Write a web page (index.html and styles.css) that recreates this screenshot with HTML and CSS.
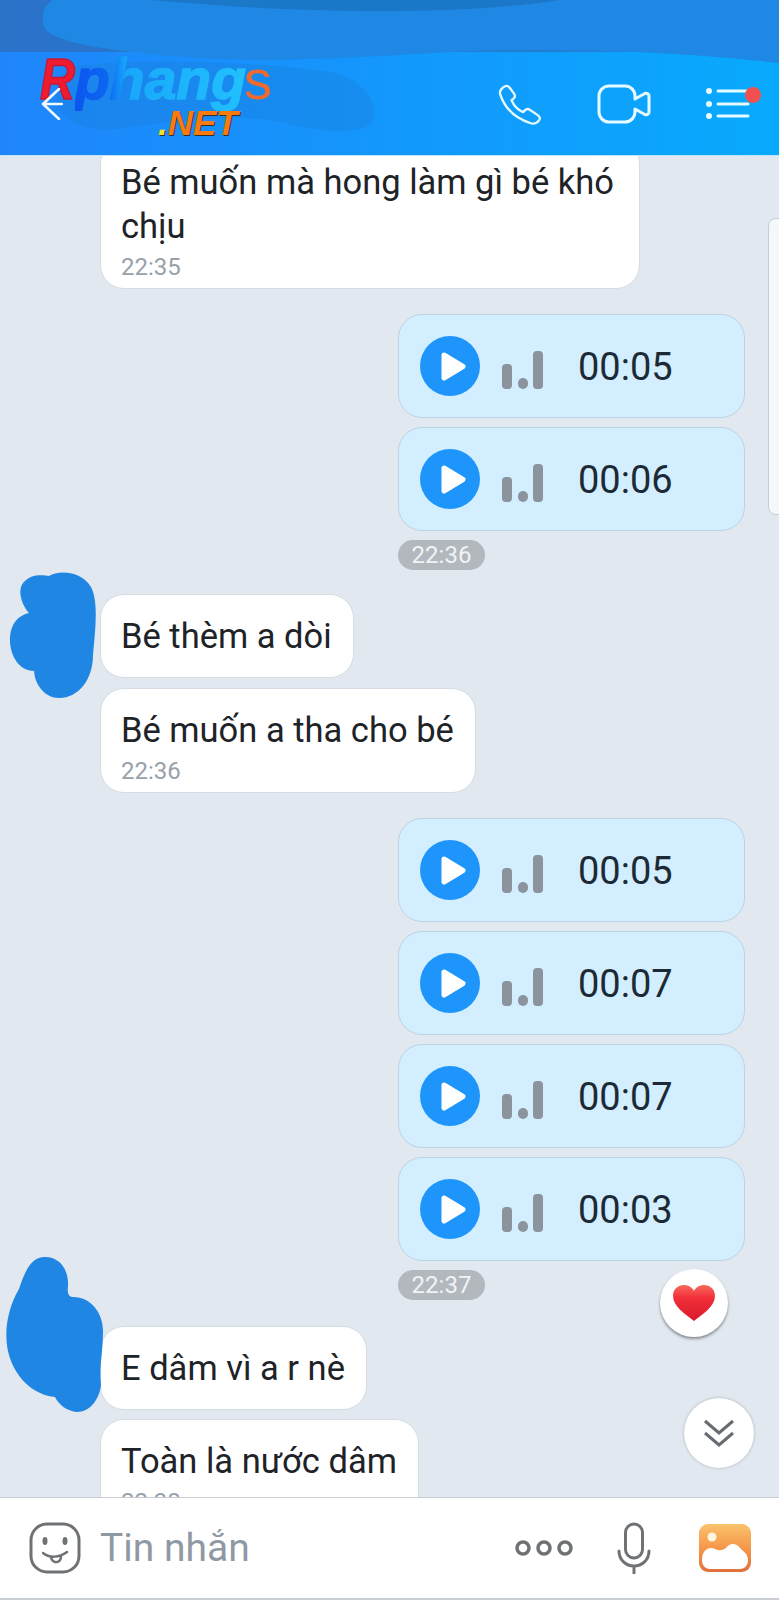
FILE: index.html
```html
<!DOCTYPE html>
<html lang="vi">
<head>
    <meta charset="UTF-8">
    <title>Tin nhắn</title>
    <link rel="stylesheet" href="styles.css">
</head>
<body>
    <div class="screen">
        <header class="header">
            <svg class="scribble" viewBox="0 0 779 156" width="779" height="156">
                <path fill="#1b78c9" d="M150 0H560C470 14 330 16 150 0Z"/>
                <path fill="#1f88e4" d="M52 0H150C330 16 470 14 560 0H779V63C700 54 620 50 520 50C420 50 300 68 160 55C110 50 60 44 46 30C40 20 42 8 52 0Z"/>
                <path fill="#1a7fdc" opacity="0.4" d="M75 66C150 58 260 62 330 72C368 80 380 108 372 122C360 136 320 132 280 122C230 112 170 122 110 130C80 130 60 118 56 100C54 84 60 70 75 66Z"/>
            </svg>
            <div class="status"></div>
            <nav class="nav">
                <svg class="back" viewBox="0 0 22 32" width="22" height="32">
                    <path d="M18 1L2 16L18 31M2 16H21" fill="none" stroke="#f4f9ff" stroke-width="2.500" stroke-linecap="round" stroke-linejoin="round"/>
                </svg>
                <svg class="nav-icon phone" viewBox="50 65 140 130" width="47" height="43">
                    <path d="M62 100C58 88 68 78 78 74C84 72 88 76 91 80L104 98C108 104 105 110 101 113L96 117C102 131 116 147 131 153L137 147C141 143 147 143 151 146L176 163C182 167 183 173 179 178C173 186 163 190 152 186C105 170 75 140 62 100Z" fill="none" stroke="#e6fbff" stroke-width="7" stroke-linejoin="round"/>
                </svg>
                <svg class="nav-icon" viewBox="0 0 56 42" width="56" height="42">
                    <path d="M12 3H28A10 10 0 0 1 38 13V16L47 11A3 3 0 0 1 52 13.500V28.500A3 3 0 0 1 47 31L38 26V29A10 10 0 0 1 28 39H12A10 10 0 0 1 2 29V13A10 10 0 0 1 12 3Z" fill="none" stroke="#e6fbff" stroke-width="3" stroke-linejoin="round"/>
                </svg>
                <svg class="nav-icon" viewBox="0 0 56 42" width="56" height="42">
                    <g fill="#e6fbff">
                        <circle cx="4" cy="8" r="3"/>
                        <circle cx="4" cy="21" r="3"/>
                        <circle cx="4" cy="33" r="3"/>
                    </g>
                    <path d="M13 8H43M13 21H43M13 33H43" stroke="#e6fbff" stroke-width="3" stroke-linecap="round"/>
                    <circle cx="48" cy="12" r="8" fill="#f2504f"/>
                </svg>
            </nav>
            <div class="logo">
                <span class="logo-r">R</span><span class="logo-phang">phang</span><span class="logo-s">s</span>
                <div class="logo-net"><span class="logo-dot">.</span>NET</div>
            </div>
        </header>

        <main class="chat">
            <div class="group left first">
                <div class="bubble wide">
                    Bé muốn mà hong làm gì bé khó chịu
                    <div class="time">22:35</div>
                </div>
            </div>

            <div class="group right">
                <div class="voice">
                    <svg class="play" viewBox="0 0 60 60" width="60" height="60"><circle cx="30" cy="30" r="30" fill="#1e95fa"/><path d="M24 19L43 30.500L24 42Z" fill="#fff" stroke="#fff" stroke-width="5" stroke-linejoin="round"/></svg>
                    <svg class="bars" viewBox="0 0 41 38" width="41" height="38"><rect x="0" y="13" width="10" height="25" rx="4"/><rect x="16" y="27" width="10" height="11" rx="5"/><rect x="31" y="0" width="10" height="38" rx="4"/></svg>
                    <span class="length">00:05</span>
                </div>
                <div class="voice">
                    <svg class="play" viewBox="0 0 60 60" width="60" height="60"><circle cx="30" cy="30" r="30" fill="#1e95fa"/><path d="M24 19L43 30.500L24 42Z" fill="#fff" stroke="#fff" stroke-width="5" stroke-linejoin="round"/></svg>
                    <svg class="bars" viewBox="0 0 41 38" width="41" height="38"><rect x="0" y="13" width="10" height="25" rx="4"/><rect x="16" y="27" width="10" height="11" rx="5"/><rect x="31" y="0" width="10" height="38" rx="4"/></svg>
                    <span class="length">00:06</span>
                </div>
                <div class="pill">22:36</div>
            </div>

            <div class="group left">
                <div class="bubble">Bé thèm a dòi</div>
                <div class="bubble">
                    Bé muốn a tha cho bé
                    <div class="time">22:36</div>
                </div>
            </div>

            <div class="group right">
                <div class="voice">
                    <svg class="play" viewBox="0 0 60 60" width="60" height="60"><circle cx="30" cy="30" r="30" fill="#1e95fa"/><path d="M24 19L43 30.500L24 42Z" fill="#fff" stroke="#fff" stroke-width="5" stroke-linejoin="round"/></svg>
                    <svg class="bars" viewBox="0 0 41 38" width="41" height="38"><rect x="0" y="13" width="10" height="25" rx="4"/><rect x="16" y="27" width="10" height="11" rx="5"/><rect x="31" y="0" width="10" height="38" rx="4"/></svg>
                    <span class="length">00:05</span>
                </div>
                <div class="voice">
                    <svg class="play" viewBox="0 0 60 60" width="60" height="60"><circle cx="30" cy="30" r="30" fill="#1e95fa"/><path d="M24 19L43 30.500L24 42Z" fill="#fff" stroke="#fff" stroke-width="5" stroke-linejoin="round"/></svg>
                    <svg class="bars" viewBox="0 0 41 38" width="41" height="38"><rect x="0" y="13" width="10" height="25" rx="4"/><rect x="16" y="27" width="10" height="11" rx="5"/><rect x="31" y="0" width="10" height="38" rx="4"/></svg>
                    <span class="length">00:07</span>
                </div>
                <div class="voice">
                    <svg class="play" viewBox="0 0 60 60" width="60" height="60"><circle cx="30" cy="30" r="30" fill="#1e95fa"/><path d="M24 19L43 30.500L24 42Z" fill="#fff" stroke="#fff" stroke-width="5" stroke-linejoin="round"/></svg>
                    <svg class="bars" viewBox="0 0 41 38" width="41" height="38"><rect x="0" y="13" width="10" height="25" rx="4"/><rect x="16" y="27" width="10" height="11" rx="5"/><rect x="31" y="0" width="10" height="38" rx="4"/></svg>
                    <span class="length">00:07</span>
                </div>
                <div class="voice">
                    <svg class="play" viewBox="0 0 60 60" width="60" height="60"><circle cx="30" cy="30" r="30" fill="#1e95fa"/><path d="M24 19L43 30.500L24 42Z" fill="#fff" stroke="#fff" stroke-width="5" stroke-linejoin="round"/></svg>
                    <svg class="bars" viewBox="0 0 41 38" width="41" height="38"><rect x="0" y="13" width="10" height="25" rx="4"/><rect x="16" y="27" width="10" height="11" rx="5"/><rect x="31" y="0" width="10" height="38" rx="4"/></svg>
                    <span class="length">00:03</span>
                </div>
                <div class="pill">22:37</div>
            </div>

            <div class="group left tight">
                <div class="bubble">E dâm vì a r nè</div>
                <div class="bubble">
                    Toàn là nước dâm
                    <div class="time">22:38</div>
                </div>
            </div>

            <!-- scribbled out avatars -->
            <svg class="blob blob-one" viewBox="0 0 88 128" width="88" height="128">
                <path fill="#1f86e3" d="M14 12C22 2 34 4 40 5C50 -1 72 0 82 16C90 32 86 60 84 84C84 108 70 127 50 127C36 127 26 114 25 100C10 100 0 84 1 66C2 52 10 44 20 42C13 34 8 20 14 12Z"/>
            </svg>
            <svg class="blob blob-two" viewBox="0 0 100 156" width="100" height="156">
                <path fill="#1f86e3" d="M40 0C56 0 64 14 63 30C62 36 64 40 68 40C86 40 98 56 98 74C98 96 94 110 96 128C94 144 84 155 72 155C62 154 54 148 50 140C30 138 14 124 6 104C-2 84 0 56 14 32C20 14 26 0 40 0Z"/>
            </svg>

            <div class="scroll-handle"></div>

            <button class="float heart">
                <svg viewBox="0 0 42 36" width="42" height="36">
                    <defs>
                        <linearGradient id="heart-fill" x1="0" y1="0" x2="0" y2="1">
                            <stop offset="0" stop-color="#f76a5e"/>
                            <stop offset="0.35" stop-color="#f2303a"/>
                            <stop offset="1" stop-color="#d9182c"/>
                        </linearGradient>
                    </defs>
                    <path fill="url(#heart-fill)" d="M21 36C12 29 0 21 0 11C0 4 5 0 11 0C15 0 19 2 21 6C23 2 27 0 31 0C37 0 42 4 42 11C42 21 30 29 21 36Z"/>
                </svg>
            </button>
            <button class="float down">
                <svg viewBox="0 0 32 28" width="32" height="28">
                    <path d="M2 2L16 14L30 2M2 14L16 26L30 14" fill="none" stroke="#666c72" stroke-width="3"/>
                </svg>
            </button>
        </main>

        <footer class="composer">
            <svg class="smile" viewBox="0 0 52 52" width="52" height="52">
                <rect x="2" y="2" width="48" height="48" rx="16" fill="none" stroke="#6f7275" stroke-width="3"/>
                <ellipse cx="16" cy="19" rx="2.500" ry="4" fill="#6f7275"/>
                <ellipse cx="36" cy="19" rx="2.500" ry="4" fill="#6f7275"/>
                <path d="M14 31C20 36 30 36 38 30M22 35C23 42 32 42 32 34" fill="none" stroke="#6f7275" stroke-width="2.500" stroke-linecap="round"/>
            </svg>
            <span class="placeholder">Tin nhắn</span>
            <svg class="more" viewBox="0 0 58 16" width="58" height="16">
                <g fill="none" stroke="#6f7275" stroke-width="3.500">
                    <circle cx="8" cy="8" r="6"/>
                    <circle cx="29" cy="8" r="6"/>
                    <circle cx="50" cy="8" r="6"/>
                </g>
            </svg>
            <svg class="mic" viewBox="0 0 34 52" width="34" height="52">
                <rect x="8.500" y="2" width="17" height="34" rx="8.500" fill="none" stroke="#6f7275" stroke-width="3"/>
                <path d="M2 29C2 38 9 44 17 44C25 44 32 38 32 29M17 44V51" fill="none" stroke="#6f7275" stroke-width="3" stroke-linecap="round"/>
            </svg>
            <svg class="gallery" viewBox="0 0 52 48" width="52" height="48">
                <defs>
                    <linearGradient id="gallery-fill" x1="0" y1="0" x2="0" y2="1">
                        <stop offset="0" stop-color="#fbc26c"/>
                        <stop offset="0.6" stop-color="#f48f43"/>
                        <stop offset="1" stop-color="#e0703e"/>
                    </linearGradient>
                </defs>
                <rect width="52" height="48" rx="9" fill="url(#gallery-fill)"/>
                <circle cx="13" cy="13" r="4.500" fill="#fff4e0"/>
                <path d="M3 36C3 26 10 22 16 25C20 27 24 27 28 23C32 18 38 20 41 24C45 28 49 30 49 36C49 42 45 45 41 45H11C6 45 3 41 3 36Z" fill="#fff"/>
            </svg>
        </footer>
    </div>
</body>
</html>
```

FILE: styles.css
```css
* {
    box-sizing: border-box;
}
body {
    margin: 0;
    font-family: Roboto, "Noto Sans", sans-serif;
    color: #1e2328;
}
.screen {
    width: 779px;
    height: 1600px;
    display: flex;
    flex-direction: column;
    background-color: #e1e8f0;
    overflow: hidden;
}

/* header */
.header {
    position: relative;
    height: 156px;
    flex-shrink: 0;
    background: linear-gradient(90deg, #1f85fb, #08aafd);
    border-bottom: 1px solid #bfe3fb;
}
.status {
    height: 52px;
    background: linear-gradient(90deg, #2b72c9, #1f80d8);
}
.scribble {
    position: absolute;
    top: 0;
    left: 0;
    z-index: 1;
}
.nav {
    position: relative;
    z-index: 2;
    height: 104px;
    display: flex;
    align-items: center;
    gap: 52px;
    padding: 0 18px 0 41px;
}
.back {
    margin-right: auto;
}
.phone {
    margin: 0 2px 0 -2px;
}
.logo {
    position: absolute;
    z-index: 1;
    top: 49px;
    left: 40px;
    width: 240px;
    font-family: "Liberation Sans", Arial, sans-serif;
    font-size: 57px;
    font-weight: bold;
    font-style: italic;
    line-height: 60px;
    white-space: nowrap;
}
.logo-r {
    display: inline-block;
    width: 35px;
    color: #ee1c2e;
    -webkit-text-stroke: 1.5px #c9163a;
    transform: scaleX(0.85);
    transform-origin: left;
}
.logo-phang {
    background: linear-gradient(90deg, #0c55ee 0%, #0c68f2 20%, #18a8fb 30%, #22c0fd 100%);
    -webkit-background-clip: text;
    background-clip: text;
    color: transparent;
    -webkit-text-stroke: 1.5px transparent;
}
.logo-s {
    margin-left: -2px;
    color: #f1692c;
    font-weight: normal;
    font-style: normal;
    font-size: 56px;
}
.logo-net {
    margin: -2px 0 0 118px;
    font-size: 35px;
    line-height: 30px;
    color: #fb7a10;
    text-shadow: 1px 1px 0 #33302a;
}
.logo-dot {
    color: #f4e02c;
}

/* messages */
.chat {
    position: relative;
    flex: 1;
    min-height: 0;
    overflow: hidden;
}
.group {
    display: flex;
    flex-direction: column;
    margin-top: 25px;
}
.left {
    align-items: flex-start;
    gap: 10px;
    margin-top: 24px;
    margin-left: 100px;
}
.first {
    margin-top: -16px;
}
.tight {
    gap: 9px;
    margin-top: 26px;
}
.right {
    align-items: flex-start;
    gap: 9px;
    width: 347px;
    margin-left: 398px;
}
.bubble {
    padding: 19px 21px 19px 20px;
    font-size: 34.5px;
    line-height: 44px;
    background-color: #fff;
    border: 1px solid #d6dce3;
    border-radius: 24px;
}
.bubble:has(.time) {
    padding-bottom: 6px;
}
.wide {
    width: 540px;
}
.time {
    margin-top: 4px;
    font-size: 24px;
    line-height: 30px;
    color: #98a1aa;
}
.voice {
    width: 100%;
    height: 104px;
    display: flex;
    align-items: center;
    padding-left: 21px;
    background-color: #d3eeff;
    border: 1px solid #bdd3e2;
    border-radius: 24px;
}
.bars {
    margin: 8px 0 0 22px;
    fill: #8b949d;
}
.length {
    margin: 2px 0 0 35px;
    font-size: 38px;
    color: #1c2a35;
}
.pill {
    width: 87px;
    height: 30px;
    font-size: 24px;
    line-height: 30px;
    text-align: center;
    color: #f1f3f5;
    background-color: #b2b8be;
    border-radius: 15px;
}
.blob {
    position: absolute;
    left: 9px;
}
.blob-one {
    top: 415px;
}
.blob-two {
    top: 1101px;
    left: 5px;
}
.scroll-handle {
    position: absolute;
    top: 62px;
    right: -2px;
    width: 13px;
    height: 297px;
    background-color: #f5f8fb;
    border: 1px solid #c6cdd5;
    border-radius: 8px 0 0 8px;
}
.float {
    position: absolute;
    display: flex;
    align-items: center;
    justify-content: center;
    padding: 0;
    background-color: #fff;
    border: none;
    border-radius: 50%;
}
.heart {
    top: 1113px;
    left: 660px;
    width: 68px;
    height: 68px;
    box-shadow: 0 2px 3px rgba(0, 0, 0, 0.4);
}
.down {
    top: 1242px;
    left: 684px;
    width: 70px;
    height: 70px;
    box-shadow: 0 0 3px rgba(0, 0, 0, 0.25);
}

/* message box */
.composer {
    height: 103px;
    flex-shrink: 0;
    display: flex;
    align-items: center;
    padding: 0 28px 0 29px;
    background-color: #fff;
    border-top: 1px solid #c9ced4;
    border-bottom: 2px solid #c9ced4;
}
.placeholder {
    margin-left: 19px;
    font-size: 39px;
    color: #8f99a3;
}
.more {
    margin-left: auto;
}
.mic {
    margin-left: 44px;
}
.gallery {
    margin-left: 48px;
}
```
